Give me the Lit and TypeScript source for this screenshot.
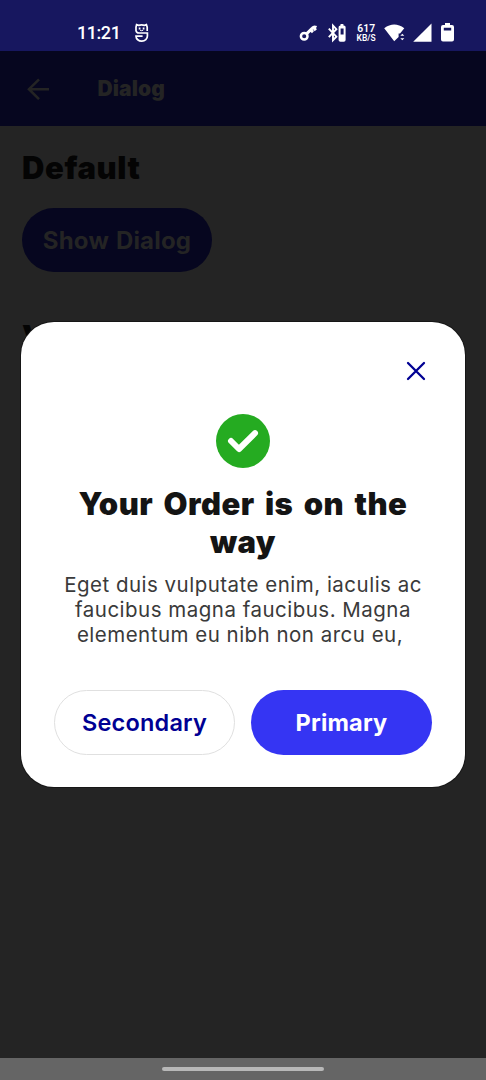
import { LitElement, html, css } from "lit";
import { customElement } from "lit/decorators.js";

@customElement("status-bar")
class StatusBar extends LitElement {
  static styles = css`
    :host { display: flex; height: 51px; box-sizing: border-box; padding: 15px 32px 0 77px; background: #17175f; color: #fff; align-items: center; justify-content: space-between; font-family: Roboto, sans-serif; }
    .group { display: flex; align-items: center; }
    .clock { font-size: 18px; font-weight: 500; line-height: 36px; letter-spacing: -0.45px; width: 57px; white-space: nowrap; }
    svg { display: block; }
    .key { margin-right: 9px; }
    .bt { margin-right: 10px; }
    .rate { margin-right: 8px; font-weight: 600; overflow: visible; }
    .num { font-size: 11.5px; }
    .unit { font-size: 9.2px; }
    .wifi { margin-right: 8px; }
    .cell { margin-right: 9px; }
  `;
  render() {
    return html`
      <div class="group">
        <span class="clock">11:21</span>
        <svg width="15" height="20" viewBox="0 0 15 20" fill="none" stroke="#fff" stroke-width="1.7">
          <path d="M13.2 8V4.2L12.4 1.6 10.6 2.4Q7.6 1.4 4.6 2.4L2.6 1.6 2 4.2V7.6Q2.4 10 5 10H13.4V13A5.6 5 0 0 1 2 13.2H8.6"/>
          <path d="M5.6 4.6v2M9.6 4.6v2"/>
          <path d="M6 7.2Q7.6 8.2 9.2 7.2" stroke-width="1"/>
        </svg>
      </div>
      <div class="group">
        <svg class="key" width="20" height="20" viewBox="0 0 20 20" fill="none" stroke="#fff">
          <circle cx="5.2" cy="13.2" r="3.3" stroke-width="2.5"/>
          <path d="M7.8 10.6 13.4 5Q15 3.2 17.4 4.4M12 7.1 14 9.1M14.8 4.8l2 2.4" stroke-width="2.9"/>
        </svg>
        <svg class="bt" width="18" height="20" viewBox="0 0 18 20">
          <path d="M.8 5.6 8.4 13.7 5 17.2V2.6L8.4 6.2.8 14.2" fill="none" stroke="#fff" stroke-width="1.9"/>
          <path fill="#fff" fill-rule="evenodd" d="M12.6 1h2.8v1.4h.4Q17.6 2.4 17.6 4v13q0 1.7-1.8 1.7h-3.4q-1.8 0-1.8-1.7V4q0-1.6 1.8-1.6zM12.6 5.4v6h3V5.4z"/>
        </svg>
        <svg class="rate" width="20" height="20" viewBox="0 0 20 20" fill="#fff">
          <text class="num" x="1.3" y="9.4" textLength="17.8" lengthAdjust="spacingAndGlyphs">617</text>
          <text class="unit" x="0.6" y="17.8" textLength="19" lengthAdjust="spacingAndGlyphs">KB/S</text>
        </svg>
        <svg class="wifi" width="21" height="20" viewBox="0 0 21 20" fill="#fff">
          <path d="M.2 5.2Q10.2-2.3 20.3 5.2L16 10.6H14.6V14L10.2 18.3z"/>
          <path d="m16.3 12.8 2-2.1 2 2.1zM16.3 15.2l2 2.1 2-2.1z"/>
        </svg>
        <svg class="cell" width="19" height="20" viewBox="0 0 19 20"><path d="M18.5.6V18.7H.2z" fill="#fff"/></svg>
        <svg width="13" height="20" viewBox="0 0 13 20"><path fill="#fff" fill-rule="evenodd" d="M4 0h5v2h2q2 0 2 2v12.5q0 2-2 2H2q-2 0-2-2V4q0-2 2-2h2zM2.8 4.7V7.5h7.4V4.7z"/></svg>
      </div>`;
  }
}

@customElement("order-dialog")
class OrderDialog extends LitElement {
  static styles = css`
    :host { display: flex; flex-direction: column; align-items: center; box-sizing: border-box; width: 443.5px; height: 465px; padding: 33px 32.5px 32.5px 33px; background: #fff; border-radius: 33px; box-shadow: 0 0 0 1px #161616; }
    .close { align-self: flex-end; margin: 6px 6.5px 0 0; display: block; }
    .check { display: block; margin-top: 33px; }
    h1 { margin: 16.5px 0 0; font-size: 31px; line-height: 38px; font-weight: 900; color: #141414; text-align: center; letter-spacing: 0.45px; word-spacing: 3.8px; white-space: nowrap; }
    p { margin: 11.5px 0 0; font-size: 20.5px; line-height: 25px; color: #3a3a3a; text-align: center; letter-spacing: 0.49px; white-space: nowrap; }
    .tail { padding-right: 6px; }
    .actions { display: grid; grid-template-columns: 1fr 1fr; gap: 16px; width: 378px; margin-top: auto; }
    button { height: 64.5px; padding: 1.5px 0 0; border-radius: 33px; font: 600 23.5px/28px Inter, sans-serif; letter-spacing: 0.2px; box-sizing: border-box; }
    .secondary { background: #fff; color: #000093; border: 1.4px solid #e0e0e0; }
    .primary { background: #3535f3; color: #fff; border: 0; font-weight: 700; }
  `;
  render() {
    return html`
      <svg class="close" width="20" height="20" viewBox="0 0 20 20" stroke="#000093" stroke-width="2.3" stroke-linecap="round"><path d="M2 2 18 18M18 2 2 18"/></svg>
      <svg class="check" width="54" height="54" viewBox="0 0 54 54"><circle cx="27" cy="27" r="27" fill="#25ab21"/><path d="M15 27 23 35 39 19.2" fill="none" stroke="#fff" stroke-width="6" stroke-linecap="round" stroke-linejoin="round"/></svg>
      <h1>Your Order is on the<br>way</h1>
      <p>Eget duis vulputate enim, iaculis ac<br>faucibus magna faucibus. Magna<br><span class="tail">elementum eu nibh non arcu eu,</span></p>
      <div class="actions">
        <button class="secondary">Secondary</button>
        <button class="primary">Primary</button>
      </div>`;
  }
}

@customElement("app-root")
class AppRoot extends LitElement {
  static styles = css`
    :host { display: flex; flex-direction: column; position: relative; width: 486px; height: 1080px; overflow: hidden; background: #242424; font-family: Inter, sans-serif; }
    .appbar { display: flex; align-items: center; height: 75px; box-sizing: border-box; padding-left: 26.5px; background: #06061f; color: #242424; }
    .appbar svg { display: block; width: 22px; margin-right: 49px; }
    .title { font-size: 21px; font-weight: 900; line-height: 26px; letter-spacing: 0.1px; padding-top: 1px; }
    main { flex: 1; padding: 23px 22px 0; }
    h2 { margin: 0; font-size: 31px; line-height: 38px; font-weight: 900; letter-spacing: 0.6px; color: #040404; }
    .show { display: block; width: 190px; height: 64px; margin: 21px 0 46px; padding: 2px 0 0; border: 0; border-radius: 32px; background: #06061f; color: #242424; font: 700 24px/28px Inter, sans-serif; letter-spacing: 0.2px; word-spacing: 1px; white-space: nowrap; }
    .nav { display: flex; height: 22px; align-items: center; justify-content: center; background: #656565; }
    .pill { width: 162px; height: 4px; border-radius: 2px; background: #b8b8b8; }
    order-dialog { position: absolute; left: 21px; top: 322px; }
  `;
  render() {
    return html`
      <status-bar></status-bar>
      <header class="appbar">
        <svg height="22" viewBox="0 0 22 22" fill="none" stroke="#242424" stroke-width="2.6"><path d="M22 11.2H2M12 1.3 2 11.2 12 21.1"/></svg>
        <span class="title">Dialog</span>
      </header>
      <main>
        <h2>Default</h2>
        <button class="show">Show Dialog</button>
        <h2>V</h2>
      </main>
      <div class="nav"><div class="pill"></div></div>
      <order-dialog></order-dialog>`;
  }
}
